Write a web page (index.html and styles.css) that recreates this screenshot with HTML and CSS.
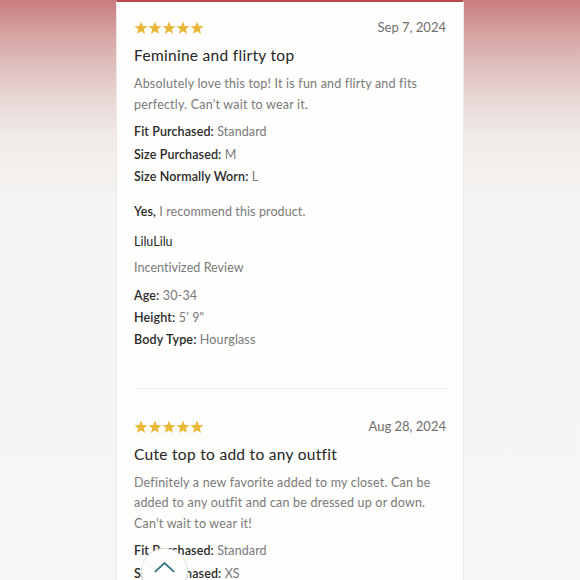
FILE: index.html
```html
<!DOCTYPE html>
<html>
<head>
<meta charset="utf-8">
<link rel="stylesheet" href="styles.css">
</head>
<body>
<div class="page">
  <div class="card">
    <div class="review">
      <div class="head">
        <div class="stars">
          <svg viewBox="0 0 70 14" width="70" height="14"><g fill="#e9b73a"><polygon points="7,0.5 8.8,5 13.5,5.2 9.8,8.3 11.1,13 7,10.3 2.9,13 4.2,8.3 0.5,5.2 5.2,5"/><polygon transform="translate(14,0)" points="7,0.5 8.8,5 13.5,5.2 9.8,8.3 11.1,13 7,10.3 2.9,13 4.2,8.3 0.5,5.2 5.2,5"/><polygon transform="translate(28,0)" points="7,0.5 8.8,5 13.5,5.2 9.8,8.3 11.1,13 7,10.3 2.9,13 4.2,8.3 0.5,5.2 5.2,5"/><polygon transform="translate(42,0)" points="7,0.5 8.8,5 13.5,5.2 9.8,8.3 11.1,13 7,10.3 2.9,13 4.2,8.3 0.5,5.2 5.2,5"/><polygon transform="translate(56,0)" points="7,0.5 8.8,5 13.5,5.2 9.8,8.3 11.1,13 7,10.3 2.9,13 4.2,8.3 0.5,5.2 5.2,5"/></g></svg>
        </div>
        <div class="date">Sep 7, 2024</div>
      </div>
      <h2 class="title">Feminine and flirty top</h2>
      <p class="body">Absolutely love this top! It is fun and flirty and fits perfectly. Can’t wait to wear it.</p>
      <div class="specs">
        <div class="row"><span class="lbl">Fit Purchased:</span> <span class="val">Standard</span></div>
        <div class="row"><span class="lbl">Size Purchased:</span> <span class="val">M</span></div>
        <div class="row"><span class="lbl">Size Normally Worn:</span> <span class="val">L</span></div>
      </div>
      <div class="rec"><span class="lbl">Yes,</span> <span class="val">I recommend this product.</span></div>
      <div class="author">LiluLilu</div>
      <div class="incent">Incentivized Review</div>
      <div class="specs about">
        <div class="row"><span class="lbl">Age:</span> <span class="val">30-34</span></div>
        <div class="row"><span class="lbl">Height:</span> <span class="val">5' 9"</span></div>
        <div class="row"><span class="lbl">Body Type:</span> <span class="val">Hourglass</span></div>
      </div>
    </div>
    <hr class="divider">
    <div class="review second">
      <div class="head">
        <div class="stars">
          <svg viewBox="0 0 70 14" width="70" height="14"><g fill="#e9b73a"><polygon points="7,0.5 8.8,5 13.5,5.2 9.8,8.3 11.1,13 7,10.3 2.9,13 4.2,8.3 0.5,5.2 5.2,5"/><polygon transform="translate(14,0)" points="7,0.5 8.8,5 13.5,5.2 9.8,8.3 11.1,13 7,10.3 2.9,13 4.2,8.3 0.5,5.2 5.2,5"/><polygon transform="translate(28,0)" points="7,0.5 8.8,5 13.5,5.2 9.8,8.3 11.1,13 7,10.3 2.9,13 4.2,8.3 0.5,5.2 5.2,5"/><polygon transform="translate(42,0)" points="7,0.5 8.8,5 13.5,5.2 9.8,8.3 11.1,13 7,10.3 2.9,13 4.2,8.3 0.5,5.2 5.2,5"/><polygon transform="translate(56,0)" points="7,0.5 8.8,5 13.5,5.2 9.8,8.3 11.1,13 7,10.3 2.9,13 4.2,8.3 0.5,5.2 5.2,5"/></g></svg>
        </div>
        <div class="date">Aug 28, 2024</div>
      </div>
      <h2 class="title">Cute top to add to any outfit</h2>
      <p class="body">Definitely a new favorite added to my closet. Can be added to any outfit and can be dressed up or down. Can’t wait to wear it!</p>
      <div class="specs">
        <div class="row"><span class="lbl">Fit Purchased:</span> <span class="val">Standard</span></div>
        <div class="row"><span class="lbl">Size Purchased:</span> <span class="val">XS</span></div>
      </div>
    </div>
  </div>
  <button class="to-top" aria-label="Back to top">
    <svg viewBox="0 0 24 12" width="21" height="11"><polyline points="1,11 12,1 23,11" fill="none" stroke="#2b6f7e" stroke-width="2"/></svg>
  </button>
</div>
</body>
</html>
```

FILE: styles.css
```css
html, body {
  margin: 0;
  padding: 0;
  height: 100%;
  overflow: hidden;
}
body {
  background: linear-gradient(to bottom, #c87c7d 0px, #d8a9a8 40px, #e7d6d4 95px, #f1ecea 140px, #f5f4f2 200px, #f6f6f4 580px);
  font-family: "Lato", "Open Sans", sans-serif;
}
.page {
  position: relative;
  height: 580px;
}
.card {
  width: 348px;
  margin: 0 auto;
  height: 580px;
  background: #fdfdfb;
  border-top: 2px solid #b8474c;
  border-left: 1px solid #ece6e4;
  border-right: 1px solid #ece6e4;
  box-sizing: border-box;
  padding: 0 17px;
  overflow: hidden;
}
.review {
  padding-top: 17px;
}
.review.second {
  padding-top: 29px;
}
.head {
  display: flex;
  justify-content: space-between;
  align-items: center;
  height: 18px;
}
.stars svg {
  display: block;
}
.date {
  font-size: 13px;
  color: #6f6f6f;
  letter-spacing: 0;
  margin-top: -2px;
}
.title {
  margin: 7px 0 0;
  font-size: 15.5px;
  font-weight: 400;
  color: #262626;
  letter-spacing: 0.3px;
  line-height: 22px;
}
.body {
  margin: 8px 0 0;
  font-size: 12.5px;
  line-height: 20.5px;
  color: #7a7a7a;
  letter-spacing: 0.2px;
}
.specs {
  margin-top: 6px;
}
.row {
  font-size: 12.5px;
  line-height: 22.5px;
  letter-spacing: 0.1px;
}
.about .row {
  line-height: 22px;
  letter-spacing: 0.15px;
}
.lbl {
  color: #2a2a2a;
  font-weight: 600;
}
.val {
  color: #7a7a7a;
}
.rec {
  margin-top: 12px;
  font-size: 12.5px;
  line-height: 22px;
  letter-spacing: 0.1px;
}
.author {
  margin-top: 8px;
  font-size: 12.5px;
  line-height: 22px;
  color: #2a2a2a;
  letter-spacing: 0;
}
.incent {
  margin-top: 4px;
  font-size: 12.5px;
  line-height: 22px;
  color: #7a7a7a;
  letter-spacing: 0.05px;
}
.specs.about {
  margin-top: 6px;
}
.divider {
  margin: 37px 0 0;
  border: 0;
  border-top: 1px solid #ececea;
}
.to-top {
  position: absolute;
  left: 141px;
  top: 548px;
  width: 47px;
  height: 47px;
  border-radius: 50%;
  background: #fdfdfb;
  border: 1px solid #e2e2e0;
  padding: 0;
  display: flex;
  align-items: flex-start;
  justify-content: center;
  padding-top: 13px;
  box-sizing: border-box;
}
.to-top svg {
  display: block;
}
```
